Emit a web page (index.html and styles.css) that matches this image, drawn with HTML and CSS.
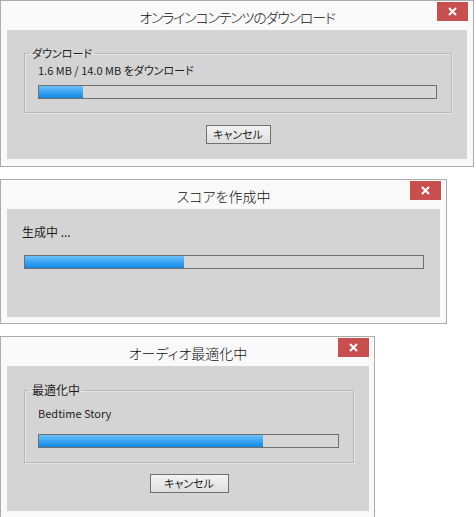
FILE: index.html
```html
<!DOCTYPE html>
<html lang="ja">
<head>
<meta charset="utf-8">
<link rel="stylesheet" href="styles.css">
</head>
<body>
<div class="stack">
  <section class="dlg d1">
    <header class="titlebar">
      <span class="title">オンラインコンテンツのダウンロード</span>
      <button class="close" aria-label="閉じる"><svg width="9" height="9" viewBox="0 0 9 9"><path d="M1 1L8 8M8 1L1 8" stroke="#fff" stroke-width="2" fill="none"/></svg></button>
    </header>
    <div class="panel">
      <fieldset class="group">
        <legend>ダウンロード</legend>
        <p class="msg">1.6 MB / 14.0 MB をダウンロード</p>
        <div class="bar"><div class="fill" style="width:11%"></div></div>
      </fieldset>
      <div class="actions"><button class="btn">キャンセル</button></div>
    </div>
  </section>

  <section class="dlg d2">
    <header class="titlebar">
      <span class="title">スコアを作成中</span>
      <button class="close" aria-label="閉じる"><svg width="9" height="9" viewBox="0 0 9 9"><path d="M1 1L8 8M8 1L1 8" stroke="#fff" stroke-width="2" fill="none"/></svg></button>
    </header>
    <div class="panel">
      <p class="msg">生成中 ...</p>
      <div class="bar"><div class="fill" style="width:40%"></div></div>
    </div>
  </section>

  <section class="dlg d3">
    <header class="titlebar">
      <span class="title">オーディオ最適化中</span>
      <button class="close" aria-label="閉じる"><svg width="9" height="9" viewBox="0 0 9 9"><path d="M1 1L8 8M8 1L1 8" stroke="#fff" stroke-width="2" fill="none"/></svg></button>
    </header>
    <div class="panel">
      <fieldset class="group">
        <legend>最適化中</legend>
        <p class="msg">Bedtime Story</p>
        <div class="bar"><div class="fill" style="width:75%"></div></div>
      </fieldset>
      <div class="actions"><button class="btn">キャンセル</button></div>
    </div>
  </section>
</div>
</body>
</html>
```
FILE: styles.css
```css
* { box-sizing: border-box; }
body {
  margin: 0;
  background: #fff;
  font-family: "Noto Sans CJK JP", "Noto Sans", sans-serif;
  font-size: 11px;
  color: #1e1e1e;
  font-feature-settings: "palt";
}
.stack {
  display: flex;
  flex-direction: column;
  align-items: flex-start;
  gap: 12px;
}
.dlg {
  position: relative;
  border: 1px solid #acacac;
  background: #f9f9f9;
  padding: 0 6px 6px;
}
.d1 { width: 474px; padding-bottom: 7px; }
.d2 { width: 447px; }
.d3 { width: 375px; padding-right: 5px; }

.titlebar {
  height: 29px;
  display: flex;
  align-items: center;
  justify-content: center;
  padding-top: 3px;
}
.title {
  font-size: 14px;
  font-weight: 300;
  line-height: 20px;
  color: #111;
}
.d1 .title { letter-spacing: -1.2px; }
.close {
  position: absolute;
  top: 1px;
  right: 5px;
  width: 31px;
  height: 19px;
  border: 0;
  padding: 0;
  background: #c74f4f;
  display: flex;
  align-items: center;
  justify-content: center;
}
.d3 .close { right: 5px; }

.panel {
  background: #d4d4d4;
}
.d1 .panel { height: 129px; padding: 15px 15px 0 17px; }
.d2 .panel { height: 108px; padding: 15px 16px 0 15px; }
.d3 .panel { height: 145px; padding: 16px 15px 0 17px; }

.group {
  margin: 0;
  border: 1px solid #b8b8b8;
  box-shadow: inset 1px 1px 0 #e6e6e6, 1px 1px 0 #e6e6e6;
  min-width: 0;
}
.d1 .group { padding: 1px 14px 13px 13px; }
.d3 .group { padding: 7px 14px 14px 13px; }
.group legend {
  padding: 0 3px;
  margin-left: -9px;
  line-height: 16px;
}
.d3 .group legend { font-size: 12px; }

.msg {
  margin: 0;
  line-height: 16px;
}
.d2 .msg { font-size: 12px; }
.bar {
  height: 14px;
  border: 1px solid #6f6f6f;
  background: #d6d6d6;
}
.d1 .bar { margin-top: 7px; }
.d2 .bar { margin-top: 15px; margin-left: 2px; }
.d3 .bar { margin-top: 13px; }
.fill {
  height: 100%;
  background: linear-gradient(#6ec2f8, #3aa4f2 50%, #1388e2);
}

.actions {
  display: flex;
  justify-content: center;
}
.d1 .actions { margin-top: 12px; }
.d3 .actions { margin-top: 11px; }
.btn {
  height: 19px;
  border: 1px solid #707070;
  background: linear-gradient(#f3f3f3, #dedede);
  font-family: inherit;
  font-size: 11px;
  line-height: 15px;
  padding: 0;
  color: #1e1e1e;
  font-feature-settings: "palt";
}
.d1 .btn { width: 65px; }
.d3 .btn { width: 79px; }
```
